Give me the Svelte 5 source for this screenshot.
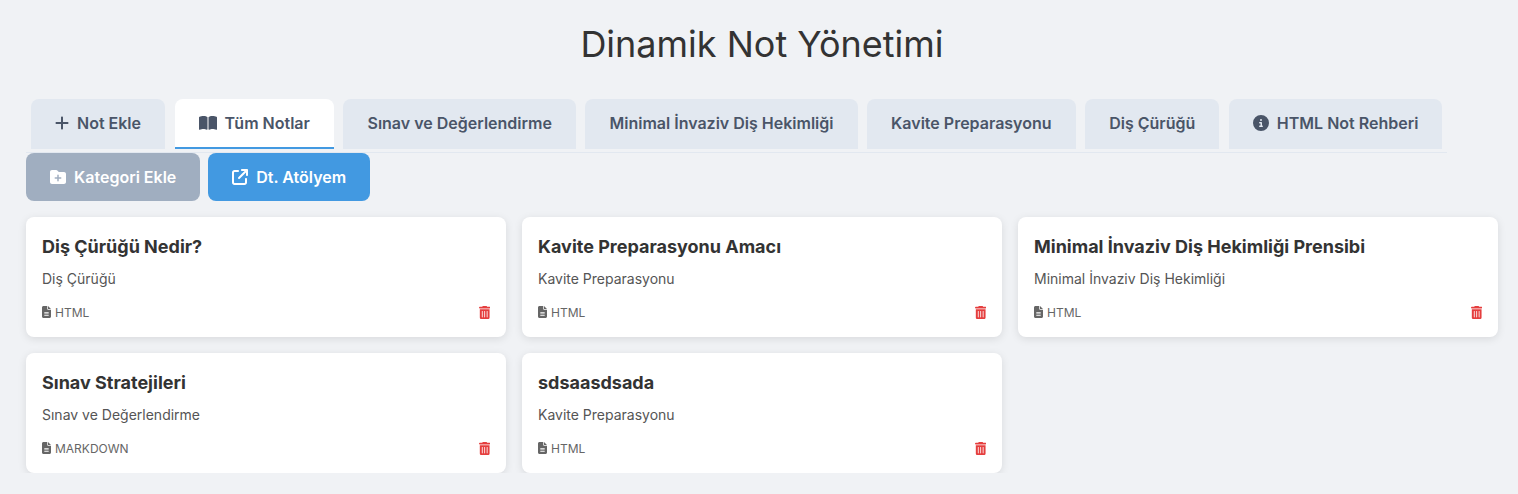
<script>
  const icons = {
    plus: { box: '0 0 448 512', d: 'M256 80c0-17.7-14.3-32-32-32s-32 14.3-32 32V224H48c-17.7 0-32 14.3-32 32s14.3 32 32 32H192V432c0 17.7 14.3 32 32 32s32-14.3 32-32V288H400c17.7 0 32-14.3 32-32s-14.3-32-32-32H256V80z' },
    book: { box: '0 0 576 512', d: 'M249.6 471.5c10.8 3.8 22.4-4.1 22.4-15.5V78.6c0-4.2-1.6-8.4-5-11C247.4 52 202.4 32 144 32C93.5 32 46.3 45.3 18.1 56.1C6.8 60.5 0 71.7 0 83.8V454.1c0 11.9 12.8 20.2 24.1 16.5C55.6 460.1 105.5 448 144 448c33.9 0 79 14 105.6 23.5zm76.8 0C353 462 398.1 448 432 448c38.5 0 88.4 12.1 119.9 22.6c11.3 3.8 24.1-4.6 24.1-16.5V83.8c0-12.1-6.8-23.3-18.1-27.6C529.7 45.3 482.5 32 432 32c-58.4 0-103.4 20-123 35.6c-3.3 2.6-5 6.8-5 11V456c0 11.4 11.7 19.3 22.4 15.5z' },
    info: { box: '0 0 512 512', d: 'M256 512A256 256 0 1 0 256 0a256 256 0 1 0 0 512zM216 336h24V272H216c-13.3 0-24-10.7-24-24s10.7-24 24-24h48c13.3 0 24 10.7 24 24v88h8c13.3 0 24 10.7 24 24s-10.7 24-24 24H216c-13.3 0-24-10.7-24-24s10.7-24 24-24zm40-208a32 32 0 1 1 0 64 32 32 0 1 1 0-64z' },
    folder: { box: '0 0 512 512', d: 'M512 416c0 35.3-28.7 64-64 64H64c-35.3 0-64-28.7-64-64V96C0 60.7 28.7 32 64 32H192c20.1 0 39.1 9.5 51.2 25.6l19.2 25.6c6 8.1 15.5 12.8 25.6 12.8H448c35.3 0 64 28.7 64 64V416zM232 376c0 13.3 10.7 24 24 24s24-10.7 24-24V312h64c13.3 0 24-10.7 24-24s-10.7-24-24-24H280V200c0-13.3-10.7-24-24-24s-24 10.7-24 24v64H168c-13.3 0-24 10.7-24 24s10.7 24 24 24h64v64z' },
    link: { box: '0 0 512 512', d: 'M320 0c-17.7 0-32 14.3-32 32s14.3 32 32 32h82.7L201.4 265.4c-12.5 12.5-12.5 32.8 0 45.3s32.8 12.5 45.3 0L448 109.3V192c0 17.7 14.3 32 32 32s32-14.3 32-32V32c0-17.7-14.3-32-32-32H320zM80 32C35.8 32 0 67.8 0 112V432c0 44.2 35.8 80 80 80H400c44.2 0 80-35.8 80-80V320c0-17.7-14.3-32-32-32s-32 14.3-32 32V432c0 8.8-7.2 16-16 16H80c-8.8 0-16-7.2-16-16V112c0-8.8 7.2-16 16-16H192c17.7 0 32-14.3 32-32s-14.3-32-32-32H80z' },
    file: { box: '0 0 384 512', d: 'M64 0C28.7 0 0 28.7 0 64V448c0 35.3 28.7 64 64 64H320c35.3 0 64-28.7 64-64V160H256c-17.7 0-32-14.3-32-32V0H64zM256 0V128H384L256 0zM112 256H272c8.8 0 16 7.2 16 16s-7.2 16-16 16H112c-8.8 0-16-7.2-16-16s7.2-16 16-16zm0 64H272c8.8 0 16 7.2 16 16s-7.2 16-16 16H112c-8.8 0-16-7.2-16-16s7.2-16 16-16zm0 64H272c8.8 0 16 7.2 16 16s-7.2 16-16 16H112c-8.8 0-16-7.2-16-16s7.2-16 16-16z' },
    trash: { box: '0 0 448 512', d: 'M135.2 17.7C140.6 6.8 151.7 0 163.8 0H284.2c12.1 0 23.2 6.8 28.6 17.7L320 32h96c17.7 0 32 14.3 32 32s-14.3 32-32 32H32C14.3 96 0 81.7 0 64S14.3 32 32 32h96l7.2-14.3zM32 128H416V448c0 35.3-28.7 64-64 64H96c-35.3 0-64-28.7-64-64V128zm96 64c-8.8 0-16 7.2-16 16V432c0 8.8 7.2 16 16 16s16-7.2 16-16V208c0-8.8-7.2-16-16-16zm96 0c-8.8 0-16 7.2-16 16V432c0 8.8 7.2 16 16 16s16-7.2 16-16V208c0-8.8-7.2-16-16-16zm96 0c-8.8 0-16 7.2-16 16V432c0 8.8 7.2 16 16 16s16-7.2 16-16V208c0-8.8-7.2-16-16-16z' }
  };

  const tabs = [
    { label: 'Not Ekle', icon: 'plus' },
    { label: 'Tüm Notlar', icon: 'book', active: true },
    { label: 'Sınav ve Değerlendirme' },
    { label: 'Minimal İnvaziv Diş Hekimliği' },
    { label: 'Kavite Preparasyonu' },
    { label: 'Diş Çürüğü' },
    { label: 'HTML Not Rehberi', icon: 'info' }
  ];

  const notes = [
    { title: 'Diş Çürüğü Nedir?', category: 'Diş Çürüğü', type: 'HTML' },
    { title: 'Kavite Preparasyonu Amacı', category: 'Kavite Preparasyonu', type: 'HTML' },
    { title: 'Minimal İnvaziv Diş Hekimliği Prensibi', category: 'Minimal İnvaziv Diş Hekimliği', type: 'HTML' },
    { title: 'Sınav Stratejileri', category: 'Sınav ve Değerlendirme', type: 'MARKDOWN' },
    { title: 'sdsaasdsada', category: 'Kavite Preparasyonu', type: 'HTML' }
  ];
</script>

{#snippet icon(name, cls)}
  <svg class={cls} viewBox={icons[name].box} fill="currentColor" aria-hidden="true"><path d={icons[name].d} /></svg>
{/snippet}

<div class="page">
  <h1>Dinamik Not Yönetimi</h1>

  <div class="tabs">
    {#each tabs as tab}
      <button class="tab" class:active={tab.active}>
        {#if tab.icon}{@render icon(tab.icon, 'tab-icon')}{/if}
        {tab.label}
      </button>
    {/each}
  </div>

  <div class="actions">
    <button class="action grey">{@render icon('folder', 'action-icon')} Kategori Ekle</button>
    <button class="action blue">{@render icon('link', 'action-icon')} Dt. Atölyem</button>
  </div>

  <div class="grid">
    {#each notes as note}
      <div class="card">
        <h3>{note.title}</h3>
        <p>{note.category}</p>
        <div class="meta">
          <span class="type">{@render icon('file', 'file-icon')} {note.type}</span>
          {@render icon('trash', 'trash-icon')}
        </div>
      </div>
    {/each}
  </div>
</div>

<style>
  :global(body) {
    margin: 0;
    background-color: #f0f2f5;
    font-family: Inter, "Liberation Sans", sans-serif;
    color: #333;
  }

  .page {
    padding: 20px 20px 0 26px;
  }

  h1 {
    margin: 0 0 30px;
    height: 49px;
    line-height: 49px;
    font-size: 36px;
    font-weight: 400;
    text-align: center;
    color: #333;
  }

  .tabs {
    display: flex;
    gap: 9.6px;
    width: fit-content;
    padding: 0 5px 3px;
    border-bottom: 1px solid #e2e8f0;
  }

  .tab {
    display: flex;
    align-items: center;
    gap: 8px;
    height: 50px;
    padding: 0 24px;
    border: none;
    border-bottom: 2px solid transparent;
    border-radius: 8px 8px 0 0;
    background-color: #e2e8f0;
    color: #4a5568;
    font-family: inherit;
    font-size: 16px;
    font-weight: 600;
  }

  .tab.active {
    background-color: #fff;
    border-bottom-color: #4299e1;
  }

  .tab-icon {
    height: 16px;
    width: auto;
  }

  .actions {
    display: flex;
    gap: 8px;
    margin-bottom: 16px;
  }

  .action {
    display: flex;
    align-items: center;
    gap: 8px;
    height: 48px;
    padding: 0 24px;
    border: none;
    border-radius: 8px;
    color: #fff;
    font-family: inherit;
    font-size: 16px;
    font-weight: 600;
  }

  .grey {
    background-color: #a0aec0;
  }

  .blue {
    background-color: #4299e1;
  }

  .action-icon {
    height: 16px;
    width: auto;
  }

  .grid {
    display: grid;
    grid-template-columns: repeat(3, 480px);
    gap: 16px;
  }

  .card {
    box-sizing: border-box;
    height: 120px;
    padding: 16px;
    background-color: #fff;
    border-radius: 8px;
    box-shadow: 0 2px 8px rgba(0, 0, 0, 0.1);
  }

  h3 {
    margin: 0 0 8px;
    font-size: 18px;
    line-height: 28px;
    font-weight: 700;
    color: #333;
  }

  p {
    margin: 0 0 15px;
    font-size: 14px;
    line-height: 20px;
    color: #555;
  }

  .meta {
    display: flex;
    justify-content: space-between;
    align-items: center;
    height: 16px;
  }

  .type {
    display: flex;
    align-items: center;
    gap: 4px;
    font-size: 12px;
    color: #666;
  }

  .file-icon {
    height: 12px;
    width: auto;
  }

  .trash-icon {
    height: 13px;
    width: auto;
    color: #e53e3e;
  }
</style>
